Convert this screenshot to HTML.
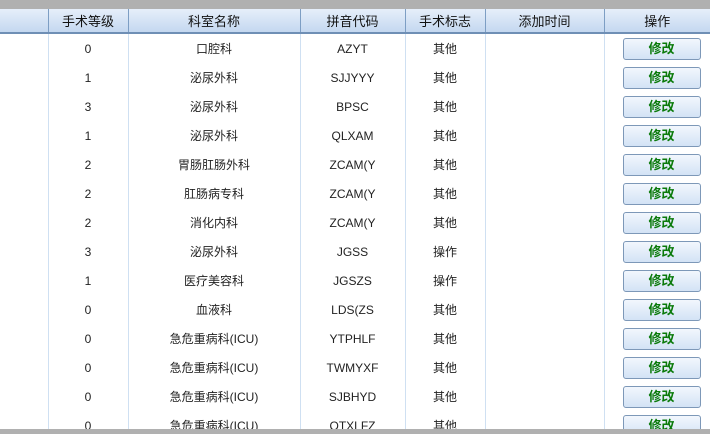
<!DOCTYPE html>
<html style="overflow:hidden;height:434px"><head><meta charset="utf-8"><style>
body{margin:0;width:710px;height:434px;overflow:hidden;background:#fff;font-family:"Liberation Sans","Noto Sans CJK SC",sans-serif;font-size:12px;color:#222;position:relative}
.top{position:absolute;left:0;top:0;width:710px;height:9px;background:#b0b0b0}
.bot{position:absolute;left:0;top:429px;width:710px;height:5px;background:#b0b0b0}
table{position:absolute;left:0;top:9px;border-collapse:collapse;table-layout:fixed;width:710px}
th{height:23px;padding:0;font-weight:normal;font-size:13px;background:linear-gradient(#e6effa,#c4d8f0);border-left:1px solid #7d9ec4;border-bottom:2px solid #6f8fb5;color:#111}
th:first-child{border-left:none}
td{height:29px;padding:0;text-align:center;border-left:1px solid #cfe0f2}
td:first-child{border-left:none}
td:last-child{text-align:left}
.b{display:inline-block;width:76px;height:20px;line-height:20px;text-align:center;border:1px solid #7d98b8;border-radius:3px;background:linear-gradient(#f2f7fd,#d3e3f5);color:#0a7a0a;font-weight:bold;font-size:13px;margin-left:18px}
</style></head><body>
<div class="top"></div>
<table>
<colgroup><col style="width:48px"><col style="width:80px"><col style="width:172px"><col style="width:105px"><col style="width:80px"><col style="width:119px"><col style="width:106px"></colgroup>
<tr><th></th><th>手术等级</th><th>科室名称</th><th>拼音代码</th><th>手术标志</th><th>添加时间</th><th>操作</th></tr>
<tr><td></td><td>0</td><td>口腔科</td><td>AZYT</td><td>其他</td><td></td><td><span class="b">修改</span></td></tr>
<tr><td></td><td>1</td><td>泌尿外科</td><td>SJJYYY</td><td>其他</td><td></td><td><span class="b">修改</span></td></tr>
<tr><td></td><td>3</td><td>泌尿外科</td><td>BPSC</td><td>其他</td><td></td><td><span class="b">修改</span></td></tr>
<tr><td></td><td>1</td><td>泌尿外科</td><td>QLXAM</td><td>其他</td><td></td><td><span class="b">修改</span></td></tr>
<tr><td></td><td>2</td><td>胃肠肛肠外科</td><td>ZCAM(Y</td><td>其他</td><td></td><td><span class="b">修改</span></td></tr>
<tr><td></td><td>2</td><td>肛肠病专科</td><td>ZCAM(Y</td><td>其他</td><td></td><td><span class="b">修改</span></td></tr>
<tr><td></td><td>2</td><td>消化内科</td><td>ZCAM(Y</td><td>其他</td><td></td><td><span class="b">修改</span></td></tr>
<tr><td></td><td>3</td><td>泌尿外科</td><td>JGSS</td><td>操作</td><td></td><td><span class="b">修改</span></td></tr>
<tr><td></td><td>1</td><td>医疗美容科</td><td>JGSZS</td><td>操作</td><td></td><td><span class="b">修改</span></td></tr>
<tr><td></td><td>0</td><td>血液科</td><td>LDS(ZS</td><td>其他</td><td></td><td><span class="b">修改</span></td></tr>
<tr><td></td><td>0</td><td>急危重病科(ICU)</td><td>YTPHLF</td><td>其他</td><td></td><td><span class="b">修改</span></td></tr>
<tr><td></td><td>0</td><td>急危重病科(ICU)</td><td>TWMYXF</td><td>其他</td><td></td><td><span class="b">修改</span></td></tr>
<tr><td></td><td>0</td><td>急危重病科(ICU)</td><td>SJBHYD</td><td>其他</td><td></td><td><span class="b">修改</span></td></tr>
<tr><td></td><td>0</td><td>急危重病科(ICU)</td><td>QTXLFZ</td><td>其他</td><td></td><td><span class="b">修改</span></td></tr>
</table>
<div class="bot"></div>
</body></html>
